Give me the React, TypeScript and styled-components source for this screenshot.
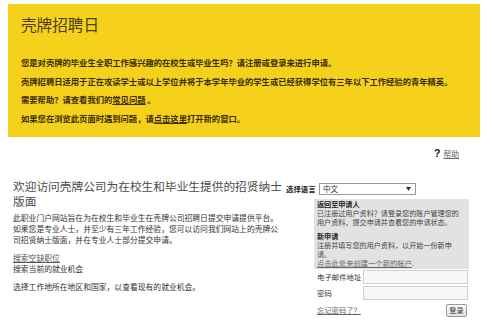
import React from "react";
import styled, { createGlobalStyle } from "styled-components";

const GlobalStyle = createGlobalStyle`
  html, body {
    margin: 0;
    padding: 0;
    background: #ffffff;
  }
  body {
    font-family: "Noto Sans CJK SC", "Liberation Sans", sans-serif;
    color: #333333;
  }
`;

const Banner = styled.header`
  margin: 4px 12px 0 8px;
  padding: 10px 13px 9px;
  background: #f6d11c;
`;

const BannerTitle = styled.h1`
  margin: 0 0 19px;
  font-size: 15.6px;
  line-height: 20px;
  font-weight: normal;
  color: #4a3d10;
`;

const BannerLine = styled.p`
  margin: 0;
  font-size: 8.3px;
  line-height: 18.7px;
  font-weight: bold;
  color: #3a2d05;
  white-space: nowrap;
`;

const BannerLink = styled.a`
  color: #3a2d05;
  text-decoration: underline;
`;

const HelpRow = styled.div`
  display: flex;
  justify-content: flex-end;
  align-items: baseline;
  gap: 3px;
  margin-top: 10px;
  padding-right: 33px;
  line-height: 12px;
`;

const HelpMark = styled.span`
  font-family: "Liberation Sans", sans-serif;
  font-size: 10.5px;
  font-weight: bold;
  color: #111111;
`;

const HelpLink = styled.a`
  font-size: 7.8px;
  color: #666666;
  text-decoration: underline;
`;

const Main = styled.main`
  display: flex;
  align-items: flex-start;
  margin-top: 18px;
  padding-left: 13px;
`;

const LeftColumn = styled.section`
  width: 272px;
  margin-right: 1px;
`;

const Heading = styled.h2`
  margin: 0 0 3px;
  font-size: 11.7px;
  line-height: 15.5px;
  font-weight: normal;
  color: #4a4a4a;
`;

const Paragraph = styled.p<{ $gap?: number }>`
  max-width: 268px;
  margin: ${(p) => p.$gap ?? 0}px 0 0;
  font-size: 7.8px;
  line-height: 11.3px;
  color: #333333;
`;

const PlainLink = styled.a`
  color: #555555;
  text-decoration: underline;
`;

const RightColumn = styled.aside`
  width: 184px;
  display: flex;
  flex-direction: column;
  margin-top: 5px;
`;

const LangRow = styled.div`
  display: flex;
  align-items: center;
`;

const LangLabel = styled.span`
  width: 33px;
  font-size: 7.4px;
  line-height: 12px;
  font-weight: bold;
  color: #222222;
`;

const SelectBox = styled.div`
  width: 97px;
  height: 12px;
  box-sizing: border-box;
  display: flex;
  align-items: center;
  justify-content: space-between;
  padding: 0 4px 0 3px;
  border: 1px solid #9a9a9a;
  background: #ffffff;
  font-size: 7.6px;
  color: #333333;
`;

const Arrow = styled.svg`
  width: 5px;
  height: 4px;
`;

const Panel = styled.div`
  width: 155px;
  margin-left: 28px;
  display: flex;
  flex-direction: column;
`;

const InfoBox = styled.div`
  margin-top: 4px;
  padding: 1px 3px 1px;
  background: #e2e2e2;
  font-size: 7.1px;
  line-height: 9px;
  color: #444444;
`;

const InfoTitle = styled.div<{ $gap?: number }>`
  margin-top: ${(p) => p.$gap ?? 0}px;
  font-weight: bold;
  color: #222222;
`;

const FormRow = styled.label<{ $gap: number }>`
  display: flex;
  align-items: center;
  justify-content: space-between;
  margin-top: ${(p) => p.$gap}px;
  padding: 0 1px 0 3px;
  font-size: 7.4px;
  color: #333333;
`;

const TextInput = styled.input`
  width: 105px;
  height: 14px;
  box-sizing: border-box;
  margin: 0;
  border: 1px solid #d0d0d0;
  background: #f7f7f7;
`;

const Actions = styled.div`
  display: flex;
  align-items: center;
  justify-content: space-between;
  margin-top: 4px;
  padding: 0 2px 0 3px;
`;

const SmallLink = styled.a`
  font-size: 7.3px;
  color: #666666;
  text-decoration: underline;
`;

const LoginButton = styled.button`
  width: 21px;
  height: 13px;
  padding: 0;
  border: 1px solid #999999;
  border-radius: 2px;
  background: linear-gradient(#fafafa, #e4e4e4);
  font-family: inherit;
  font-size: 7.2px;
  line-height: 11px;
  color: #333333;
`;

export default function App() {
  return (
    <>
      <GlobalStyle />
      <Banner>
        <BannerTitle>壳牌招聘日</BannerTitle>
        <BannerLine>您是对壳牌的毕业生全职工作感兴趣的在校生或毕业生吗？请注册或登录来进行申请。</BannerLine>
        <BannerLine>
          壳牌招聘日适用于正在攻读学士或以上学位并将于本学年毕业的学生或已经获得学位有三年以下工作经验的青年精英。
        </BannerLine>
        <BannerLine>
          需要帮助？请查看我们的<BannerLink href="#">常见问题</BannerLink> 。
        </BannerLine>
        <BannerLine>
          如果您在浏览此页面时遇到问题，请<BannerLink href="#">点击这里</BannerLink>打开新的窗口。
        </BannerLine>
      </Banner>

      <HelpRow>
        <HelpMark>?</HelpMark>
        <HelpLink href="#">帮助</HelpLink>
      </HelpRow>

      <Main>
        <LeftColumn>
          <Heading>欢迎访问壳牌公司为在校生和毕业生提供的招贤纳士版面</Heading>
          <Paragraph>
            此职业门户网站旨在为在校生和毕业生在壳牌公司招聘日提交申请提供平台。
            如果您是专业人士，并至少有三年工作经验，您可以访问我们网站上的壳牌公司招贤纳士版面，并在专业人士部分提交申请。
          </Paragraph>
          <Paragraph $gap={6}>
            <PlainLink href="#">搜索空缺职位</PlainLink>
            <br />
            搜索当前的就业机会
          </Paragraph>
          <Paragraph $gap={7}>选择工作地所在地区和国家，以查看现有的就业机会。</Paragraph>
        </LeftColumn>

        <RightColumn>
          <LangRow>
            <LangLabel>选择语言</LangLabel>
            <SelectBox>
              <span>中文</span>
              <Arrow viewBox="0 0 5 4">
                <path d="M0 0h5L2.5 4z" fill="#333" />
              </Arrow>
            </SelectBox>
          </LangRow>
          <Panel>
            <InfoBox>
              <InfoTitle>返回至申请人</InfoTitle>
              已注册过用户资料？请登录您的账户管理您的
              <br />
              用户资料，提交申请并查看您的申请状态。
              <InfoTitle $gap={5}>新申请</InfoTitle>
              注册并填写您的用户资料，以开始一份新申
              <br />
              请。
              <br />
              <SmallLink href="#">点击此处来创建一个新的帐户</SmallLink>.
            </InfoBox>
            <FormRow $gap={1}>
              电子邮件地址
              <TextInput type="text" />
            </FormRow>
            <FormRow $gap={2}>
              密码
              <TextInput type="password" />
            </FormRow>
            <Actions>
              <SmallLink href="#">忘记密码了？</SmallLink>
              <LoginButton type="button">登录</LoginButton>
            </Actions>
          </Panel>
        </RightColumn>
      </Main>
    </>
  );
}
